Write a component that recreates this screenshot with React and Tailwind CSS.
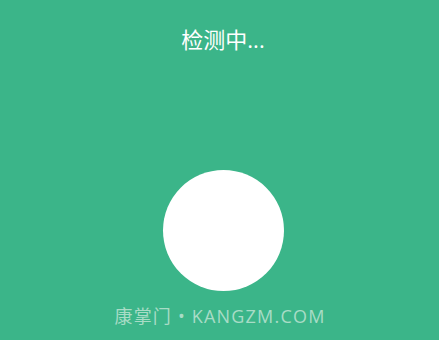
import React from 'react';

export default function App() {
  return (
    <div
      className="w-[439px] h-[340px] bg-[#3bb589] flex flex-col items-center overflow-hidden"
      style={{ fontFamily: '"Open Sans", "Noto Sans CJK SC", sans-serif' }}
    >
      {/* Status + indicator */}
      <div className="flex flex-col items-center pl-[7px]">
        <h1 className="mt-[23px] text-[22px] leading-[32px] text-white font-normal">检测中...</h1>
        <div className="mt-[115px] w-[121px] h-[121px] rounded-full bg-white" />
      </div>

      {/* Footer brand */}
      <p className="mt-[12px] pl-[1px] text-[18px] leading-[26px] tracking-[1.2px] text-[#a8dcc6]">康掌门 • KANGZM.COM</p>
    </div>
  );
}
